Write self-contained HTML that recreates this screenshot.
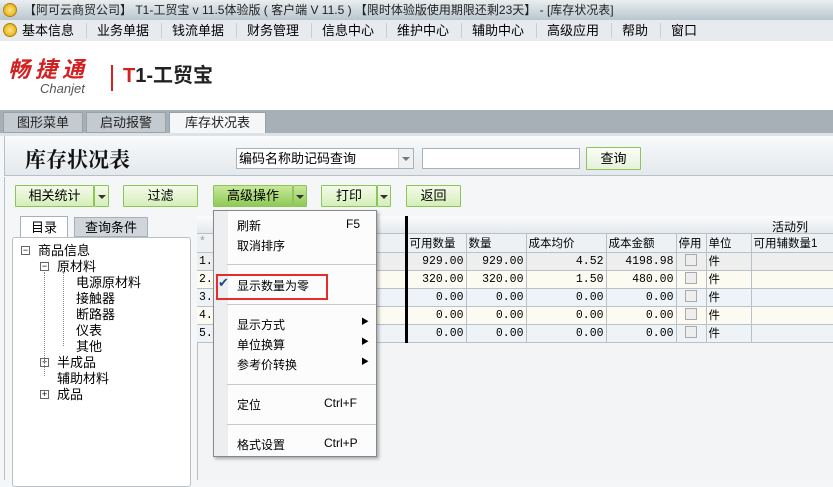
<!DOCTYPE html>
<html><head><meta charset="utf-8"><style>
*{margin:0;padding:0;box-sizing:border-box}
body{width:833px;height:480px;overflow:hidden;position:relative;background:#f4f6f8;font-family:"Liberation Sans","Noto Sans CJK SC",sans-serif;font-size:12px;color:#000}
.a{position:absolute}
.title{left:0;top:0;width:833px;height:20px;background:linear-gradient(#e9eef1,#b9c6ce);color:#222;font-size:12px;line-height:20px;padding-left:24px}
.coin{width:14px;height:14px;border-radius:50%;background:radial-gradient(#ffe680,#d9a200);border:1px solid #b88000}
.menu{left:0;top:20px;width:833px;height:21px;background:#e7ebef;line-height:21px;font-size:13px}
.menu span{position:absolute;top:0}
.sep{position:absolute;top:3px;width:1px;height:15px;background:#c8ced4}
.logo{left:0;top:41px;width:833px;height:69px;background:#fff}
.tabs{left:0;top:110px;width:833px;height:23px;background:#a7b0b6}
.tab{position:absolute;top:2px;height:21px;background:#c3cad0;border:1px solid #9aa3aa;text-align:center;line-height:20px;font-size:13px;color:#222}
.btn{position:absolute;height:22px;border:1px solid #8cc65a;background:linear-gradient(#f4fbe9,#d5eeb8);text-align:center;line-height:20px;font-size:13px;border-radius:1px}
.btn.on{background:linear-gradient(#c8e89a,#8fca55)}
.arr{position:absolute;width:0;height:0;border-left:4px solid transparent;border-right:4px solid transparent;border-top:4px solid #333}
.grid td{border-right:1px solid #b8c0c8;border-bottom:1px solid #b8c0c8;height:18px;padding:0 2px;font-family:"Liberation Mono","Noto Sans CJK SC",monospace;font-size:11.5px;text-align:right;white-space:nowrap}
.grid{border-collapse:collapse;table-layout:fixed}
.cb{display:inline-block;width:12px;height:12px;border:1px solid #aaa;background:#eee;vertical-align:middle}
.mi{position:absolute;left:23px;font-size:12px}
.ms{position:absolute;left:13px;width:149px;height:1px;background:#c8c8c8}
.tr{position:absolute;font-size:13px;white-space:nowrap}
.bx{position:absolute;width:9px;height:9px;border:1px solid #666;background:#fff;font-size:9px;line-height:7px;text-align:center}
</style></head><body>
<div class="a title">【阿可云商贸公司】 T1-工贸宝 v 11.5体验版 ( 客户端 V 11.5 ) 【限时体验版使用期限还剩23天】 - [库存状况表]</div>
<div class="a coin" style="left:3px;top:3px"></div>
<div class="a menu">
<div class="coin" style="position:absolute;left:3px;top:3px"></div>
<span style="left:22px">基本信息</span><i class="sep" style="left:86px"></i>
<span style="left:97px">业务单据</span><i class="sep" style="left:161px"></i>
<span style="left:172px">钱流单据</span><i class="sep" style="left:236px"></i>
<span style="left:247px">财务管理</span><i class="sep" style="left:311px"></i>
<span style="left:322px">信息中心</span><i class="sep" style="left:386px"></i>
<span style="left:397px">维护中心</span><i class="sep" style="left:461px"></i>
<span style="left:472px">辅助中心</span><i class="sep" style="left:536px"></i>
<span style="left:547px">高级应用</span><i class="sep" style="left:611px"></i>
<span style="left:622px">帮助</span><i class="sep" style="left:660px"></i>
<span style="left:671px">窗口</span>
</div>
<div class="a logo">
<div class="a" style="left:8px;top:16px;font-size:22px;line-height:26px;font-weight:bold;font-style:italic;color:#d42020;letter-spacing:5px">畅捷通</div>
<div class="a" style="left:40px;top:40px;font-size:13px;line-height:15px;font-style:italic;color:#555">Chanjet</div>
<div class="a" style="left:111px;top:24px;width:2px;height:26px;background:#d42020"></div>
<div class="a" style="left:123px;top:22px;font-size:20px;line-height:26px;font-weight:bold;color:#222"><span style="color:#d42020">T</span>1-工贸宝</div>
</div>
<div class="a tabs">
<div class="tab" style="left:3px;width:80px">图形菜单</div>
<div class="tab" style="left:86px;width:80px">启动报警</div>
<div class="tab" style="left:169px;width:97px;background:#f4f6f8;border-bottom:none">库存状况表</div>
</div>
<div class="a" style="left:0;top:133px;width:833px;height:3px;background:#dde2e6"></div>
<div class="a" style="left:4px;top:136px;width:829px;height:40px;background:linear-gradient(#f8fafb,#e4e9ed);border-bottom:1px solid #b8c0c6;border-left:1px solid #b8c0c6"></div>
<div class="a" style="left:25px;top:144px;font-size:21px;font-weight:bold;font-family:'Noto Serif CJK SC',serif;color:#111">库存状况表</div>
<div class="a" style="left:236px;top:148px;width:178px;height:21px;background:#fff;border:1px solid #a8b0b8;font-size:13px;line-height:19px;padding-left:2px">编码名称助记码查询</div>
<div class="a" style="left:398px;top:149px;width:15px;height:19px;background:#eef0f2;border-left:1px solid #ccc"></div>
<div class="arr" style="left:402px;top:157px;border-top-color:#777"></div>
<div class="a" style="left:422px;top:148px;width:158px;height:21px;background:#fff;border:1px solid #a8b0b8"></div>
<div class="btn" style="left:586px;top:147px;width:55px;height:23px;line-height:21px;background:linear-gradient(#fafdf6,#e6f1dc)">查询</div>
<div class="a" style="left:4px;top:177px;width:1px;height:303px;background:#b8c0c6"></div>

<div class="btn" style="left:15px;top:185px;width:79px">相关统计</div>
<div class="btn" style="left:94px;top:185px;width:15px"></div><div class="arr" style="left:98px;top:195px"></div>
<div class="btn" style="left:123px;top:185px;width:75px">过滤</div>
<div class="btn on" style="left:213px;top:185px;width:80px">高级操作</div>
<div class="btn on" style="left:293px;top:185px;width:14px"></div><div class="arr" style="left:296px;top:195px"></div>
<div class="btn" style="left:321px;top:185px;width:56px">打印</div>
<div class="btn" style="left:377px;top:185px;width:14px"></div><div class="arr" style="left:380px;top:195px"></div>
<div class="btn" style="left:406px;top:185px;width:55px">返回</div>

<div class="a" style="left:20px;top:216px;width:48px;height:22px;background:#fff;border:1px solid #a8b0b8;border-bottom:none;text-align:center;line-height:21px;font-size:13px">目录</div>
<div class="a" style="left:74px;top:217px;width:74px;height:20px;background:#cfd5da;border:1px solid #a8b0b8;text-align:center;line-height:19px;font-size:13px">查询条件</div>
<div class="a" style="left:12px;top:237px;width:179px;height:250px;background:#fff;border:1px solid #b8c0c6;border-radius:3px"></div>
<div class="bx" style="left:21px;top:246px">−</div><div class="tr" style="left:38px;top:240px">商品信息</div>
<div class="bx" style="left:40px;top:262px">−</div><div class="tr" style="left:57px;top:256px">原材料</div>
<div class="tr" style="left:76px;top:272px">电源原材料</div>
<div class="tr" style="left:76px;top:288px">接触器</div>
<div class="tr" style="left:76px;top:304px">断路器</div>
<div class="tr" style="left:76px;top:320px">仪表</div>
<div class="tr" style="left:76px;top:336px">其他</div>
<div class="bx" style="left:40px;top:358px">+</div><div class="tr" style="left:57px;top:352px">半成品</div>
<div class="tr" style="left:57px;top:368px">辅助材料</div>
<div class="bx" style="left:40px;top:390px">+</div><div class="tr" style="left:57px;top:384px">成品</div>
<div class="a" style="left:44px;top:272px;height:104px;border-left:1px dotted #888"></div>
<div class="a" style="left:63px;top:272px;height:74px;border-left:1px dotted #888"></div>

<div class="a" style="left:197px;top:216px;width:636px;height:264px;background:#f2f4f6;border-left:1px solid #b8c0c6"></div>
<div class="a" style="left:197px;top:216px;width:636px;height:18px;background:linear-gradient(#fbfcfd,#e4e8ec);border-bottom:1px solid #b8c0c8"></div>
<div class="a" style="left:772px;top:218px;font-size:12px">活动列</div>
<table class="grid a" style="left:197px;top:234px;width:636px">
<colgroup><col style="width:209px"><col style="width:60px"><col style="width:60px"><col style="width:80px"><col style="width:70px"><col style="width:30px"><col style="width:45px"><col style="width:82px"></colgroup>
<tr style="background:#eef1f4"><td style="text-align:left;color:#999">*</td><td style="text-align:left;font-family:inherit;border-left:3px solid #000">可用数量</td><td style="text-align:left;font-family:inherit">数量</td><td style="text-align:left;font-family:inherit">成本均价</td><td style="text-align:left;font-family:inherit">成本金额</td><td style="text-align:left;font-family:inherit">停用</td><td style="text-align:left;font-family:inherit">单位</td><td style="text-align:left;font-family:inherit">可用辅数量1</td></tr>
<tr style="background:#eeeeee"><td style="text-align:left">1.</td><td style="border-left:3px solid #000">929.00</td><td>929.00</td><td>4.52</td><td>4198.98</td><td style="text-align:center"><i class="cb"></i></td><td style="text-align:left;font-family:inherit">件</td><td></td></tr>
<tr style="background:#fcfbf1"><td style="text-align:left">2.</td><td style="border-left:3px solid #000">320.00</td><td>320.00</td><td>1.50</td><td>480.00</td><td style="text-align:center"><i class="cb"></i></td><td style="text-align:left;font-family:inherit">件</td><td></td></tr>
<tr style="background:#eef3f8"><td style="text-align:left">3.</td><td style="border-left:3px solid #000">0.00</td><td>0.00</td><td>0.00</td><td>0.00</td><td style="text-align:center"><i class="cb"></i></td><td style="text-align:left;font-family:inherit">件</td><td></td></tr>
<tr style="background:#fcfbf1"><td style="text-align:left">4.</td><td style="border-left:3px solid #000">0.00</td><td>0.00</td><td>0.00</td><td>0.00</td><td style="text-align:center"><i class="cb"></i></td><td style="text-align:left;font-family:inherit">件</td><td></td></tr>
<tr style="background:#eef3f8"><td style="text-align:left">5.</td><td style="border-left:3px solid #000">0.00</td><td>0.00</td><td>0.00</td><td>0.00</td><td style="text-align:center"><i class="cb"></i></td><td style="text-align:left;font-family:inherit">件</td><td></td></tr>
</table>
<div class="a" style="left:405px;top:216px;width:3px;height:127px;background:#000"></div>

<div class="a" style="left:213px;top:210px;width:164px;height:247px;background:#fcfcfc;border:1px solid #888;box-shadow:2px 2px 3px rgba(0,0,0,.3)">
<div class="a" style="left:0;top:0;width:14px;height:245px;background:#eceef0"></div>
<div class="mi" style="top:6px">刷新</div><div class="a" style="left:132px;top:6px">F5</div>
<div class="mi" style="top:26px">取消排序</div>
<div class="ms" style="top:53px"></div>
<div class="a" style="left:2px;top:63px;width:112px;height:26px;border:2px solid #e52b2b"></div>
<div class="a" style="left:4px;top:64px;font-size:13px;color:#1a4a8a">✔</div>
<div class="mi" style="top:66px">显示数量为零</div>
<div class="ms" style="top:93px"></div>
<div class="mi" style="top:105px">显示方式</div><div class="a" style="left:147px;top:105px;font-size:8px">▶</div>
<div class="mi" style="top:125px">单位换算</div><div class="a" style="left:147px;top:125px;font-size:8px">▶</div>
<div class="mi" style="top:145px">参考价转换</div><div class="a" style="left:147px;top:145px;font-size:8px">▶</div>
<div class="ms" style="top:173px"></div>
<div class="mi" style="top:185px">定位</div><div class="a" style="left:110px;top:185px">Ctrl+F</div>
<div class="ms" style="top:213px"></div>
<div class="mi" style="top:225px">格式设置</div><div class="a" style="left:110px;top:225px">Ctrl+P</div>
</div>
</body></html>
